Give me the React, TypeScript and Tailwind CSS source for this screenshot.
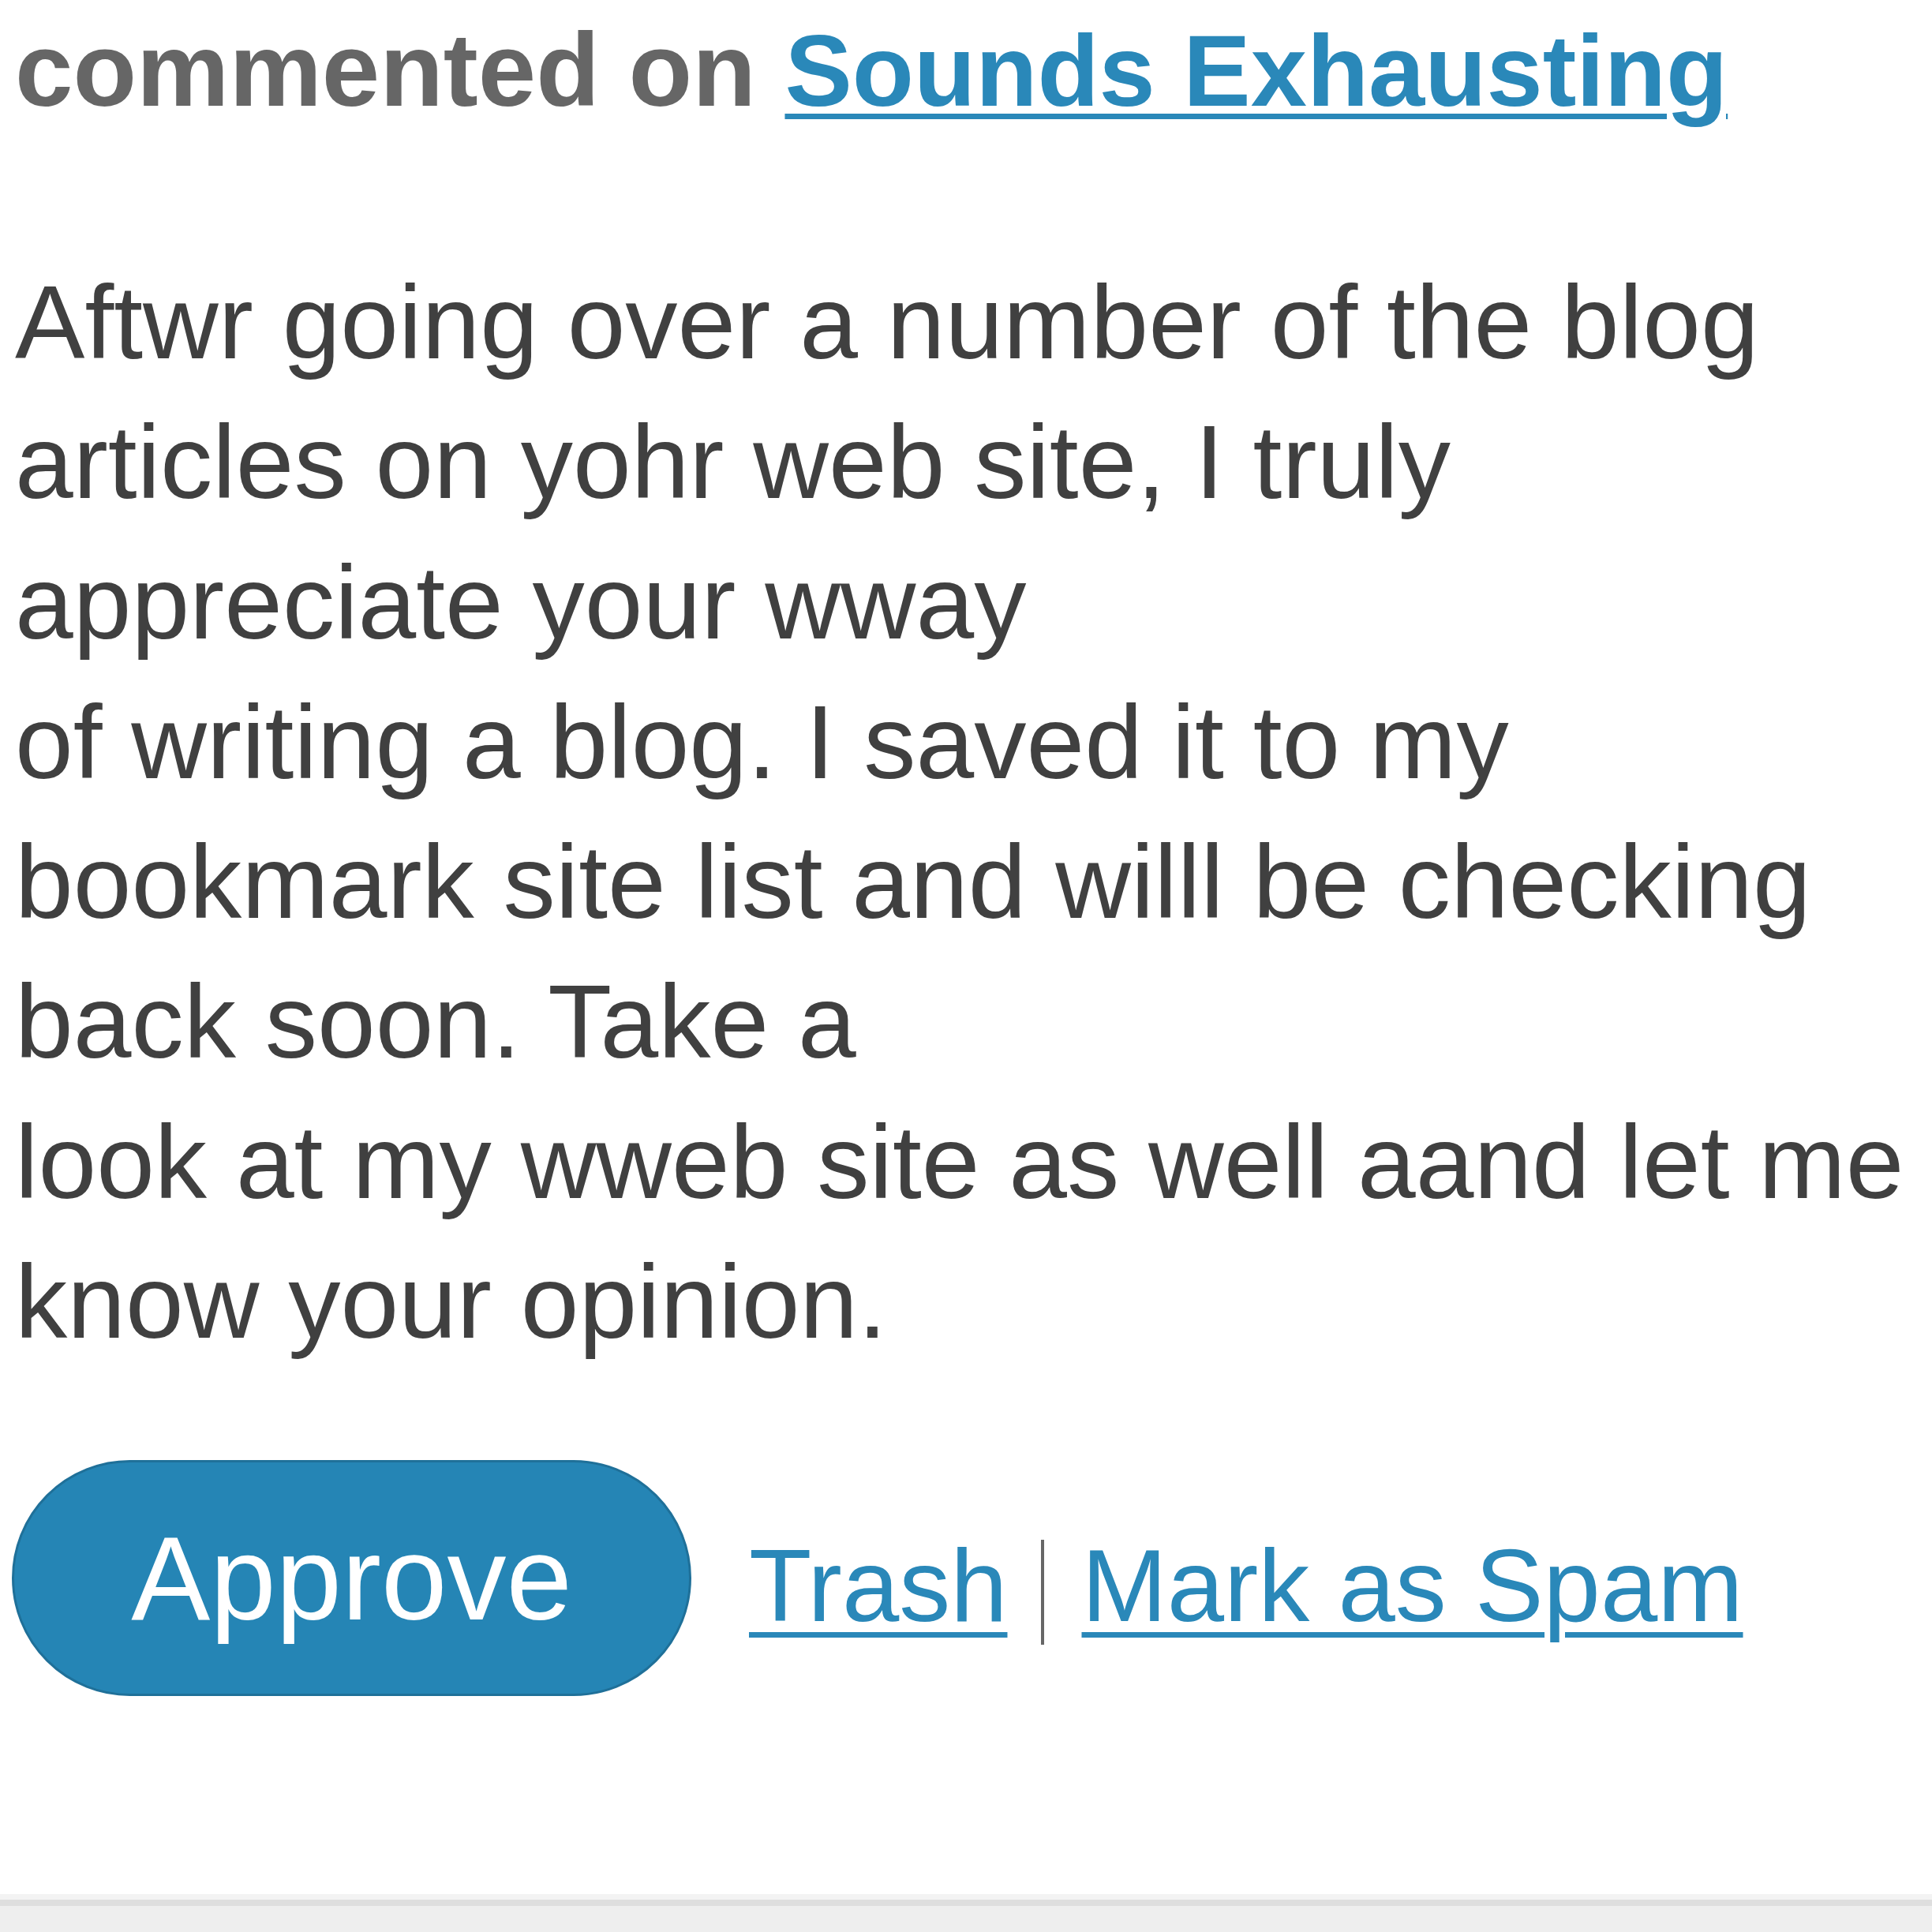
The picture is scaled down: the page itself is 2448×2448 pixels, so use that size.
import React from "react";

const lines = [
  "Aftwr going over a number of the blog",
  "articles on yohr web site, I truly",
  "appreciate your wway",
  "of writing a blog. I saved it to my",
  "bookmark site list and willl be checking",
  "back soon. Take a",
  "look at my wweb site as well aand let me",
  "know your opinion.",
];

export default function App() {
  return (
    <div
      className="w-[2448px] h-[2448px] bg-white flex flex-col overflow-hidden"
      style={{ fontFamily: '"Liberation Sans", Arial, Helvetica, sans-serif' }}
    >
      <div className="pl-[19px] text-[132px] leading-[177px] font-bold text-[#666666] whitespace-nowrap">
        commented on{" "}
        <a
          href="#"
          className="text-[128px] text-[#2a88b9] underline decoration-[7px] underline-offset-[10px]"
        >
          Sounds Exhausting
        </a>
      </div>

      <div className="mt-[142px] pl-[19px] text-[132.5px] leading-[177.3px] text-[#404040] whitespace-nowrap">
        {lines.map((l, i) => (
          <div key={i}>{l}</div>
        ))}
      </div>

      <div className="mt-[112px] pl-[15px] flex items-start">
        <button className="w-[861px] h-[299px] rounded-full bg-[#2585b5] border-[3px] border-[#1f7099] text-white text-[150px] leading-none flex items-center justify-center shrink-0">
          Approve
        </button>
        <a
          href="#"
          className="ml-[73px] mt-[84px] text-[130px] leading-[150px] text-[#2a88b9] underline decoration-[7px] underline-offset-[14px] whitespace-nowrap"
        >
          Trash
        </a>
        <span className="ml-[43px] mt-[101px] w-[4px] h-[133px] bg-[#666666] shrink-0" />
        <a
          href="#"
          className="ml-[47px] mt-[84px] text-[130px] leading-[150px] text-[#2a88b9] underline decoration-[7px] underline-offset-[14px] whitespace-nowrap"
        >
          Mark as Spam
        </a>
      </div>

      <div className="mt-auto h-[48px] flex flex-col">
        <div className="h-[7px] bg-[#f3f3f3]" />
        <div className="h-[8px] bg-[#dedede]" />
        <div className="flex-1 bg-[#eeeeee]" />
      </div>
    </div>
  );
}
